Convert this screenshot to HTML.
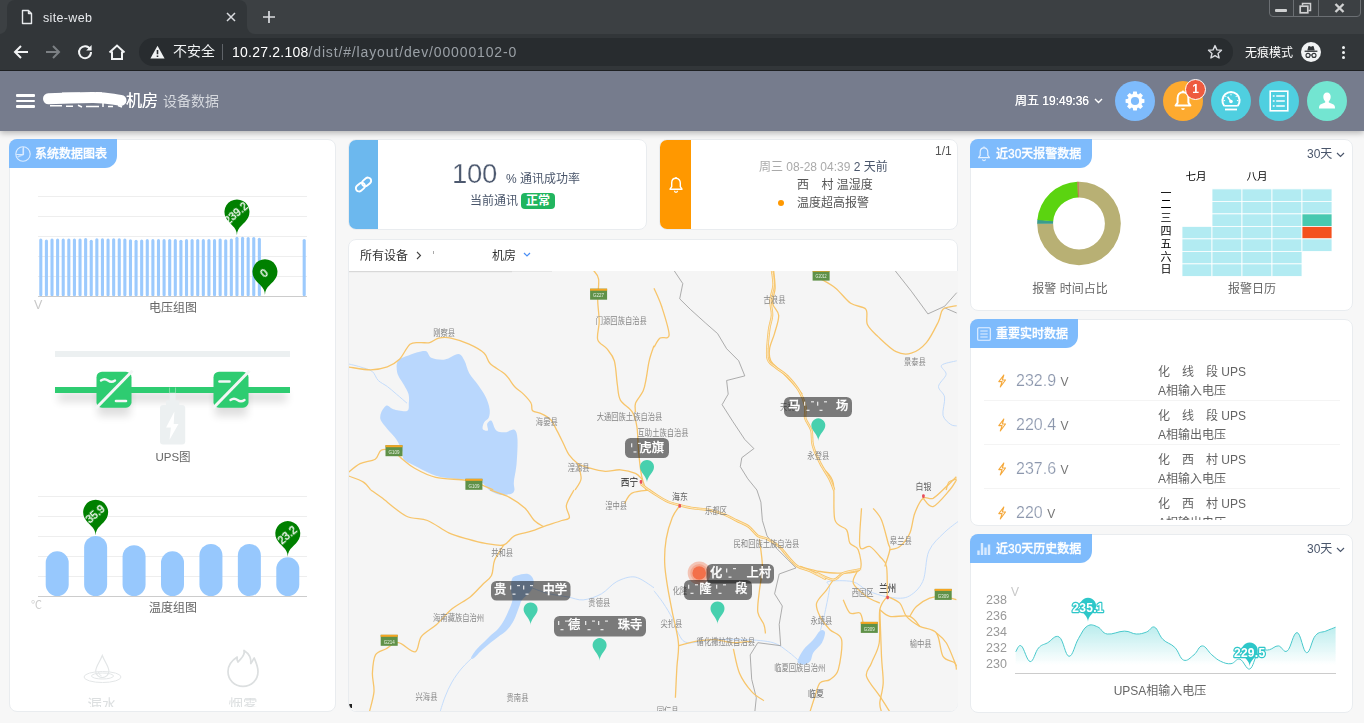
<!DOCTYPE html>
<html lang="zh-CN"><head><meta charset="utf-8"><title>site-web</title>
<style>
*{box-sizing:border-box;margin:0;padding:0}
html,body{width:1364px;height:727px;overflow:hidden;background:#f7f7f7}
body{position:relative;font-family:"Liberation Sans","Noto Sans CJK SC",sans-serif;font-size:12px;color:#555;line-height:1}
.abs{position:absolute}
svg{position:absolute;overflow:visible}
.t{position:absolute;white-space:nowrap;line-height:1;will-change:transform}
svg text{will-change:transform}
.c{transform:translateX(-50%)}
.panel{position:absolute;background:#fff;border:1px solid #e9ecef;border-radius:8px;overflow:hidden}
</style></head>
<body>
<!-- page panels -->
<div class="panel" style="left:9px;top:139px;width:327px;height:573px"></div>
<div class="abs" style="left:9px;top:139px;width:108px;height:29px;background:#7ebbfc;border-radius:8px 0 12px 0"></div>
<svg style="left:15px;top:146px" width="16" height="16" viewBox="0 0 16 16"><circle cx="8" cy="8" r="7.2" fill="none" stroke="#dcecff" stroke-width="1.1"/><path d="M8.3 1v7.5H1.2" fill="none" stroke="#dcecff" stroke-width="1.1"/><path d="M8.3 8.5V2.2M8.3 8.5L2.5 11" stroke="#dcecff" stroke-width="1.6" opacity=".7"/></svg>
<div class="t" style="left:34.8px;top:147.7px;font-size:12px;font-weight:500;color:#fff;letter-spacing:0;-webkit-text-stroke:.3px #fff">系统数据图表</div>
<svg style="left:0;top:0" width="1364" height="727">
<path d="M38 196.5H307" stroke="#eee" stroke-width="1"/>
<path d="M38 216.5H307" stroke="#eee" stroke-width="1"/>
<path d="M38 236.5H307" stroke="#eee" stroke-width="1"/>
<path d="M38 256.5H307" stroke="#eee" stroke-width="1"/>
<path d="M38 276.5H307" stroke="#eee" stroke-width="1"/>
<rect x="39.25" y="238.5" width="3.1" height="57.7" rx="1.55" fill="#9ccafd"/>
<rect x="44.86" y="239.5" width="3.1" height="56.7" rx="1.55" fill="#9ccafd"/>
<rect x="50.46" y="238.38" width="3.1" height="57.82" rx="1.55" fill="#9ccafd"/>
<rect x="56.06" y="238.5" width="3.1" height="57.7" rx="1.55" fill="#9ccafd"/>
<rect x="61.67" y="238.5" width="3.1" height="57.7" rx="1.55" fill="#9ccafd"/>
<rect x="67.27" y="238.5" width="3.1" height="57.7" rx="1.55" fill="#9ccafd"/>
<rect x="72.88" y="238.5" width="3.1" height="57.7" rx="1.55" fill="#9ccafd"/>
<rect x="78.48" y="238.5" width="3.1" height="57.7" rx="1.55" fill="#9ccafd"/>
<rect x="84.09" y="238" width="3.1" height="58.2" rx="1.55" fill="#9ccafd"/>
<rect x="89.69" y="239.75" width="3.1" height="56.45" rx="1.55" fill="#9ccafd"/>
<rect x="95.29" y="238.25" width="3.1" height="57.95" rx="1.55" fill="#9ccafd"/>
<rect x="100.9" y="238.25" width="3.1" height="57.95" rx="1.55" fill="#9ccafd"/>
<rect x="106.5" y="238.38" width="3.1" height="57.82" rx="1.55" fill="#9ccafd"/>
<rect x="112.11" y="238.25" width="3.1" height="57.95" rx="1.55" fill="#9ccafd"/>
<rect x="117.71" y="238.25" width="3.1" height="57.95" rx="1.55" fill="#9ccafd"/>
<rect x="123.31" y="238.38" width="3.1" height="57.82" rx="1.55" fill="#9ccafd"/>
<rect x="128.92" y="239.25" width="3.1" height="56.95" rx="1.55" fill="#9ccafd"/>
<rect x="134.52" y="239.75" width="3.1" height="56.45" rx="1.55" fill="#9ccafd"/>
<rect x="140.13" y="239.5" width="3.1" height="56.7" rx="1.55" fill="#9ccafd"/>
<rect x="145.73" y="239.12" width="3.1" height="57.07" rx="1.55" fill="#9ccafd"/>
<rect x="151.34" y="239.12" width="3.1" height="57.07" rx="1.55" fill="#9ccafd"/>
<rect x="156.94" y="239.12" width="3.1" height="57.07" rx="1.55" fill="#9ccafd"/>
<rect x="162.54" y="239.12" width="3.1" height="57.07" rx="1.55" fill="#9ccafd"/>
<rect x="168.15" y="239" width="3.1" height="57.2" rx="1.55" fill="#9ccafd"/>
<rect x="173.75" y="239.12" width="3.1" height="57.07" rx="1.55" fill="#9ccafd"/>
<rect x="179.36" y="239.75" width="3.1" height="56.45" rx="1.55" fill="#9ccafd"/>
<rect x="184.96" y="239.12" width="3.1" height="57.07" rx="1.55" fill="#9ccafd"/>
<rect x="190.56" y="239" width="3.1" height="57.2" rx="1.55" fill="#9ccafd"/>
<rect x="196.17" y="239" width="3.1" height="57.2" rx="1.55" fill="#9ccafd"/>
<rect x="201.77" y="239.12" width="3.1" height="57.07" rx="1.55" fill="#9ccafd"/>
<rect x="207.38" y="239" width="3.1" height="57.2" rx="1.55" fill="#9ccafd"/>
<rect x="212.98" y="239.12" width="3.1" height="57.07" rx="1.55" fill="#9ccafd"/>
<rect x="218.59" y="238.5" width="3.1" height="57.7" rx="1.55" fill="#9ccafd"/>
<rect x="224.19" y="239.25" width="3.1" height="56.95" rx="1.55" fill="#9ccafd"/>
<rect x="229.79" y="238.38" width="3.1" height="57.82" rx="1.55" fill="#9ccafd"/>
<rect x="235.4" y="236.7" width="3.1" height="59.5" rx="1.55" fill="#9ccafd"/>
<rect x="241" y="236.75" width="3.1" height="59.45" rx="1.55" fill="#9ccafd"/>
<rect x="246.61" y="236.88" width="3.1" height="59.32" rx="1.55" fill="#9ccafd"/>
<rect x="252.21" y="236.88" width="3.1" height="59.32" rx="1.55" fill="#9ccafd"/>
<rect x="257.81" y="237.75" width="3.1" height="58.45" rx="1.55" fill="#9ccafd"/>
<rect x="302.65" y="239" width="3.1" height="57.2" rx="1.55" fill="#9ccafd"/>
<path d="M38 296.5H307" stroke="#ccc" stroke-width="1"/>
<path d="M225.7 217.45A12.5 12.5 0 1 1 248.2 217.45C244.92 224.2 236.95 226.45 236.95 235.2C236.95 226.45 228.97 224.2 225.7 217.45Z" fill="#008000"/>
<text x="236.05" y="213.2" transform="rotate(-41 236.05 213.2)" text-anchor="middle" dominant-baseline="central" font-size="10.8" fill="#fff" stroke="#fff" stroke-width=".35">239.2</text>
<path d="M253.72 277.25A12.5 12.5 0 1 1 276.22 277.25C272.94 284 264.97 286.25 264.97 295C264.97 286.25 256.99 284 253.72 277.25Z" fill="#008000"/>
<text x="264.07" y="273" transform="rotate(-41 264.07 273)" text-anchor="middle" dominant-baseline="central" font-size="10.8" fill="#fff" stroke="#fff" stroke-width=".35">0</text>
<path d="M38 496.5H307" stroke="#eee" stroke-width="1"/>
<path d="M38 516.5H307" stroke="#eee" stroke-width="1"/>
<path d="M38 536.5H307" stroke="#eee" stroke-width="1"/>
<path d="M38 556.5H307" stroke="#eee" stroke-width="1"/>
<path d="M38 576.5H307" stroke="#eee" stroke-width="1"/>
<rect x="45.71" y="551.3" width="23" height="44.7" rx="11.5" fill="#97c8fd"/>
<rect x="84.14" y="536" width="23" height="60" rx="11.5" fill="#97c8fd"/>
<rect x="122.57" y="545.2" width="23" height="50.8" rx="11.5" fill="#97c8fd"/>
<rect x="161" y="551.3" width="23" height="44.7" rx="11.5" fill="#97c8fd"/>
<rect x="199.43" y="543.9" width="23" height="52.1" rx="11.5" fill="#97c8fd"/>
<rect x="237.86" y="543.9" width="23" height="52.1" rx="11.5" fill="#97c8fd"/>
<rect x="276.29" y="557.3" width="23" height="38.7" rx="11.5" fill="#97c8fd"/>
<path d="M38 596.5H307" stroke="#ccc" stroke-width="1"/>
<path d="M84.4 517.75A12.5 12.5 0 1 1 106.89 517.75C103.62 524.5 95.64 526.75 95.64 535.5C95.64 526.75 87.67 524.5 84.4 517.75Z" fill="#008000"/>
<text x="94.74" y="513.5" transform="rotate(-41 94.74 513.5)" text-anchor="middle" dominant-baseline="central" font-size="10.8" fill="#fff" stroke="#fff" stroke-width=".35">35.9</text>
<path d="M276.54 539.05A12.5 12.5 0 1 1 299.03 539.05C295.76 545.8 287.79 548.05 287.79 556.8C287.79 548.05 279.81 545.8 276.54 539.05Z" fill="#008000"/>
<text x="286.89" y="534.8" transform="rotate(-41 286.89 534.8)" text-anchor="middle" dominant-baseline="central" font-size="10.8" fill="#fff" stroke="#fff" stroke-width=".35">23.2</text>
<rect x="55" y="351" width="235" height="6" fill="#ecf0f1"/>
<defs><filter id="gs" x="-20%" y="-50%" width="140%" height="300%"><feGaussianBlur stdDeviation="4"/></filter></defs>
<rect x="58" y="392" width="229" height="10" fill="#000" opacity=".12" filter="url(#gs)"/>
<rect x="98" y="386" width="32" height="30" fill="#000" opacity=".13" filter="url(#gs)"/><rect x="215" y="386" width="32" height="30" fill="#000" opacity=".13" filter="url(#gs)"/>
<rect x="55" y="387" width="235" height="6" fill="#2ecc71"/>
<path d="M169.5 387.5v5.5h6v-5.5" fill="none" stroke="#8fe0b0" stroke-width=".8"/>
<rect x="169.6" y="393" width="6" height="9" fill="#ecf0f1"/><rect x="166" y="400.5" width="13.2" height="6" rx="1" fill="#ecf0f1"/><rect x="160" y="405" width="25.2" height="39.6" rx="3" fill="#ecf0f1"/>
<path d="M174.4 411.6l-8.3 15.8h4.8l-1.4 12.4 9-15.8h-4.8z" fill="#fff"/>
<rect x="96.5" y="371.7" width="35" height="36" rx="5.5" fill="#2ecc71"/>
<path d="M95.5 408.7L132.5 370.7" stroke="#f4f6f6" stroke-width="3"/>
<path d="M101 380.5q3.5-2.5 7 0t7 0" fill="none" stroke="#f4f6f6" stroke-width="2.4" stroke-linecap="round"/>
<path d="M116 401h10" stroke="#f4f6f6" stroke-width="2.6" stroke-linecap="round"/>
<rect x="213.5" y="371.7" width="35" height="36" rx="5.5" fill="#2ecc71"/>
<path d="M212.5 408.7L249.5 370.7" stroke="#f4f6f6" stroke-width="3"/>
<path d="M219.5 381.5h10" stroke="#f4f6f6" stroke-width="2.6" stroke-linecap="round"/>
<path d="M230.5 400q3.5-2.5 7 0t7 0" fill="none" stroke="#f4f6f6" stroke-width="2.4" stroke-linecap="round"/>
<g fill="none" stroke="#e3e6e7" stroke-width="1"><path d="M102.3 655.5c-2.5 6.5-6.6 11-6.6 15.5a6.6 6.6 0 0 0 13.2 0c0-4.5-4.1-9-6.6-15.5z" stroke-width="1.2"/><path d="M98.5 672a4 4 0 0 0 3 3.8" /><ellipse cx="102.5" cy="677" rx="18.5" ry="5.5"/><ellipse cx="102.5" cy="676" rx="11" ry="3"/></g>
<path d="M244 650.5c1.5 5.5-3.5 8-6 11.5-1-1.5-1.2-3.2-.8-5-5.5 3.5-9.2 8.5-9.2 14.5 0 8.5 6.5 14.8 15 14.8s15-6.3 15-14.8c0-5-2-9-3.8-13.5-1.5 2-2.2 4.5-3.4 5.5.5-5-2-10-6.8-13z" fill="none" stroke="#dcdfe0" stroke-width="1.7" stroke-linejoin="round"/>
</svg>
<div class="t" style="left:33.5px;top:299px;font-size:12.5px;color:#c8c8c8">V</div>
<div class="t c" style="left:172.5px;top:302.3px;font-size:12px;color:#666">电压组图</div>
<div class="t c" style="left:172.5px;top:452px;font-size:11.5px;color:#666">UPS图</div>
<div class="t" style="left:31px;top:599.5px;font-size:11px;color:#ccc">℃</div>
<div class="t c" style="left:172.5px;top:602.2px;font-size:12px;color:#666">温度组图</div>
<div class="abs" style="left:10px;top:690px;width:325px;height:16.5px;overflow:hidden"><div class="t c" style="left:92px;top:8px;font-size:14.5px;color:#dcdfe0">漏水</div><div class="t c" style="left:233px;top:8px;font-size:14.5px;color:#dcdfe0">烟雾</div></div>
<div class="panel" style="left:348px;top:139px;width:299px;height:91px"><div class="abs" style="left:0;top:0;width:29px;height:100%;background:#6cb8ee"></div></div>
<svg style="left:355px;top:176px" width="17" height="17" viewBox="0 0 17 17"><g fill="none" stroke="#fff" stroke-width="1.9" transform="rotate(-40 8.5 8.5)"><rect x="-0.5" y="5.3" width="10" height="6.4" rx="3.2"/><rect x="7.5" y="5.3" width="10" height="6.4" rx="3.2"/></g></svg>
<div class="t" style="left:451.5px;top:159.5px;font-size:27.5px;color:#4d596f;letter-spacing:-0.3px;-webkit-text-stroke:.25px #fff">100</div>
<div class="t" style="left:506px;top:173px;font-size:12px;color:#4a566b">% 通讯成功率</div>
<div class="t" style="left:469.5px;top:195.2px;font-size:12px;color:#4a566b">当前通讯</div>
<div class="abs" style="left:521px;top:193px;width:34px;height:16px;border-radius:4px;background:#21b55f;color:#fff;font-weight:bold;font-size:12px;text-align:center;line-height:17px">正常</div>
<div class="panel" style="left:659px;top:139px;width:299px;height:91px"><div class="abs" style="left:0;top:0;width:31px;height:100%;background:#ff9800"></div></div>
<svg style="left:668px;top:176px" width="16" height="18" viewBox="0 0 16 18"><path d="M8 2.3c-2.7 0-4.3 2.1-4.3 4.6v3.8L2 13.2h12l-1.7-2.5V6.9c0-2.5-1.6-4.6-4.3-4.6z" fill="none" stroke="#fff" stroke-width="1.4" stroke-linejoin="round"/><path d="M6.5 14.8a1.5 1.5 0 0 0 3 0" fill="none" stroke="#fff" stroke-width="1.3"/><path d="M8 1v1.3" stroke="#fff" stroke-width="1.4"/></svg>
<div class="t" style="left:935px;top:145px;font-size:12px;color:#555">1/1</div>
<div class="t" style="left:758.5px;top:161px;font-size:12px;color:#aaa">周三 08-28 04:39 <span style="color:#4a566b">2 天前</span></div>
<div class="t" style="left:796.5px;top:179px;font-size:12px;color:#555">西<span style="display:inline-block;width:12.5px"></span>村 温湿度</div>
<div class="abs" style="left:778px;top:200px;width:6px;height:6px;border-radius:50%;background:#ff9800"></div>
<div class="t" style="left:796.5px;top:197px;font-size:12px;color:#555">温度超高报警</div>
<div class="panel" style="left:348px;top:238.5px;width:610px;height:473.5px"></div>
<div class="t" style="left:360px;top:249.5px;font-size:12px;color:#333">所有设备</div>
<svg style="left:416px;top:250.5px" width="6" height="9" viewBox="0 0 6 9"><path d="M1 1l3.5 3.5L1 8" fill="none" stroke="#444" stroke-width="1.1"/></svg>
<div class="t" style="left:491.5px;top:249.5px;font-size:12px;color:#333">机房</div>
<div class="abs" style="left:433px;top:251px;width:1px;height:3px;background:#555;opacity:.5"></div>
<svg style="left:523px;top:252px" width="8" height="6" viewBox="0 0 8 6"><path d="M1 1l3 3 3-3" fill="none" stroke="#4b8ff5" stroke-width="1.2"/></svg>
<svg style="left:349px;top:271px" width="609" height="440" viewBox="349 271 609 440"><defs><clipPath id="mc"><path d="M349 271h609v432a8 8 0 0 1-8 8H357a8 8 0 0 1-8-8z"/></clipPath></defs><g clip-path="url(#mc)">
<rect x="349" y="271" width="609" height="440" fill="#f5f5f5"/>
<path d="M397.9 360.8C399.7 358 404.2 356.9 408.5 355.4C412.9 353.8 421.5 350.7 425.2 351.1C428.8 351.5 428.1 356.4 431.2 357.8C434.4 359.1 440.5 360.2 444.9 359.6C449.2 359 455.3 353.9 458.5 354.1C461.6 354.3 462.8 357.8 464.5 360.8C466.2 363.8 466.9 369 469.1 372.9C471.2 376.8 475.5 381.1 478.1 385C480.8 388.9 483.9 393.2 485.7 397.1C487.6 401 489.2 405.9 489.6 409.2C490.1 412.5 489.6 415.6 488.7 417.7C487.9 419.8 485.2 420.4 484.2 422.2C483.2 424 482.1 427.6 482.7 428.9C483.3 430.2 487.1 431.2 487.8 430.4C488.6 429.6 486.6 425.3 487.2 423.8C487.8 422.2 490 419.7 491.5 420.7C492.9 421.8 494.1 428.6 496.3 430.4C498.5 432.3 502.5 432.3 505.4 432.2C508.3 432.1 512.5 428.6 514.5 429.8C516.4 431 517.2 434.1 517.5 439.5C517.8 444.9 517.2 456.9 516.6 463.7C516 470.5 514.2 477.7 513.9 481.9C513.5 486.1 514.8 488.1 514.4 490C514 491.9 513.6 492.9 511.4 493.7C509.2 494.4 504.1 495.4 500.7 494.9C497.3 494.4 493.1 492.7 490 490.6C486.9 488.5 484.5 483.7 481.2 481.9C477.8 480.1 473.4 479.9 469.1 479.4C464.7 479 459.3 479.4 453.9 478.8C448.6 478.3 441.6 477.7 435.8 475.8C430 474 422.7 470 417.6 467.3C412.5 464.7 406.4 462 404 459.5C401.6 456.9 403.7 454.8 402.5 451.6C401.3 448.4 398.8 443.1 396.4 439.5C394 435.9 389.9 432 387.3 428.9C384.8 425.8 381.7 422.8 380.7 420.1C379.7 417.5 380.3 414.6 381.3 412.3C382.3 409.9 384.8 406.1 386.7 405.6C388.7 405.1 390.2 408.4 393.4 409.2C396.6 410.1 404.5 412 407 411C409.5 410.1 408.6 405.9 408.8 403.2C409.1 400.5 409.3 397 408.5 394.1C407.8 391.2 405.8 388.4 404 385C402.2 381.6 398.3 376.8 397.3 372.9C396.4 369 396.1 363.6 397.9 360.8Z" fill="#b9d7fd"/>
<path d="M512 579C513 576.7 514.4 576.3 517 575.5C519.6 574.7 525.4 573.3 528 574C530.6 574.7 532.9 577.4 533.5 580C534.1 582.6 533.3 586.8 531.5 590C529.7 593.2 523.9 597.4 522 600C520.1 602.6 520.8 602.8 519.5 606C518.2 609.2 516 616.2 514 620C512 623.8 509.6 627.3 507 630C504.4 632.7 500.9 634.8 498 637C495.1 639.2 491.7 641.8 489 644C486.3 646.2 483.4 648.8 481 651C478.6 653.2 475.6 656.9 474 658C472.4 659.1 470.7 659.3 471 658C471.3 656.7 473.9 652.6 476 650C478.1 647.4 481.8 644.2 484 642C486.2 639.8 487.9 637.9 490 636C492.1 634.1 494.9 632.2 497 630C499.1 627.8 501.2 624.9 503 622C504.8 619.1 506.5 615.5 508 612C509.5 608.5 512 603.5 512.5 600C513 596.5 511.1 593.4 511 590C510.9 586.6 511 581.3 512 579Z" fill="#b9d7fd"/>
<path d="M797.5 661.6C797.5 659.2 801.2 652.8 803.6 649.4C806.1 646 810.1 643.3 812.8 640.3C815.5 637.2 818.5 631.7 820.4 630.5C822.4 629.2 824.8 630.4 825 632.3C825.3 634.3 823.8 639.5 822 642.7C820.1 645.9 815.3 649.5 813.4 652.5C811.6 655.4 811.9 659.1 810.4 661C808.8 663 805.7 664.6 803.6 664.7C801.6 664.8 797.5 664.1 797.5 661.6Z" fill="#b9d7fd"/>
<path d="M348 363.8C349.9 364.3 356.2 365.6 360.1 366.9C364 368.1 369.3 369.2 372.2 371.4C375.1 373.6 375.8 378.1 378.3 380.5C380.7 382.9 384.4 384.3 387.3 386.5C390.3 388.7 393.3 391.4 396.4 394.1C399.6 396.8 405.3 401.7 407 403.2" stroke="#c4dcfb" stroke-width="1" fill="none"/>
<path d="M473 657C471.2 658.8 465.4 664 462 668C458.6 672 454.7 677.4 452 682C449.3 686.6 446.9 692.2 445 697C443.1 701.8 440.8 709.6 440 712" stroke="#c4dcfb" stroke-width="1" fill="none"/>
<path d="M531.2 587.7C534.2 588.7 543.7 592.4 549.6 593.8C555.4 595.3 562.5 595.9 567.9 596.9C573.3 597.9 577.8 600.4 583.2 599.9C588.5 599.5 596.1 596.8 601.5 593.8C606.8 590.9 611.4 584.3 616.7 581.6C622.1 578.9 629.1 576.1 635.1 577C641 578 651 586 654 587.7" stroke="#c4dcfb" stroke-width="1" fill="none"/>
<path d="M654 590.8C655.5 592.7 660.2 598.6 663.2 603C666.1 607.4 669.9 613.4 672.3 618.3C674.8 623.2 676 629.6 678.4 633.5C680.9 637.4 681.7 641.7 687.6 642.7C693.5 643.7 705.8 640.1 715.1 639.6C724.4 639.2 736.3 639.2 745.6 639.6C754.9 640.1 766.3 640.7 773.1 642.7C779.9 644.6 784.2 648.9 788.4 651.9C792.5 654.8 797.4 659.6 799.1 661" stroke="#c4dcfb" stroke-width="1" fill="none"/>
<path d="M820.4 630.5C821.2 627.5 823.6 619 825 612.2C826.5 605.3 829.1 592.6 829.6 587.7C830.1 582.8 824.4 582.6 828.1 581.6C831.7 580.6 846.2 580.2 852.5 581.6C858.9 583.1 862.2 588.3 867.8 590.8C873.4 593.2 881.3 595.9 887.6 596.9C894 597.9 901.9 599.3 907.5 596.9C913.1 594.4 919.3 588.9 922.7 581.6C926.2 574.3 925.4 558.9 928.9 551.1C932.3 543.3 939.2 537.6 944.1 532.8C949 527.9 956.9 522.5 959.4 520.5" stroke="#c4dcfb" stroke-width="1" fill="none"/>
<path d="M956.7 360.8C954.2 361.5 943.2 363.2 941.5 365.3C939.8 367.5 946.6 371 946.1 374.4C945.6 377.8 938.7 382.9 938.5 386.5C938.3 390.2 943.8 392.5 944.6 397.1C945.3 401.7 942.1 410.9 943 415.3C944 419.6 948.4 422.7 950.6 424.4C952.8 426.1 955.7 425.6 956.7 425.9" stroke="#c4dcfb" stroke-width="1" fill="none"/>
<path d="M673.7 270L682.8 283.6L679.7 298.8L690.3 309.3L705.5 323L717.6 333.6L726.6 348.7L738.7 360.8L744.8 375.9L726.6 380.5L728.2 394.1L722.1 404.7L732.7 421.3L744.8 439.5L753.9 448.6L741.8 457.7L740.3 466.7L747.8 478.8L756.9 490L760.9 502.2L762.4 520.5L767 535.8L776.2 548L788.4 560.2L796 567.9L779.2 574L774.6 593.8L782.3 606L779.2 624.4L780.7 645.7L757.8 642.7L750.2 654.9L751.7 679.3L756.3 697.7L754.8 712" stroke="#999" stroke-width=".8" fill="none"/>
<path d="M894.6 270L911.3 291.2L927.9 313.9L944.6 306.3L956.7 292.7" stroke="#999" stroke-width=".8" fill="none"/>
<path d="M944.6 307.8L956.7 313" stroke="#999" stroke-width=".8" fill="none"/>
<path d="M348 366.9C351.6 367.3 364.4 369.9 370.7 369.9C377 369.9 382.7 368.5 387.3 366.9C391.9 365.2 395.8 362.9 399.5 359.3C403.1 355.7 406.7 346.8 410 344.2C413.4 341.5 417.5 342.9 420.6 342.6C423.8 342.4 426.8 343.4 429.7 342.6C432.6 341.9 435.4 338.8 438.8 338.1C442.2 337.4 446.1 337.1 450.9 338.1C455.7 339.1 463.7 341.7 469.1 344.2C474.4 346.6 480.8 350.1 484.2 353.2C487.6 356.4 486.9 360.4 490.3 363.8C493.6 367.2 501.5 370.8 505.4 374.4C509.3 378.1 511.6 383.4 514.5 386.5C517.4 389.7 520.9 391.4 523.5 394.1C526.2 396.8 529.7 400.5 531.1 403.2C532.6 405.8 530.9 409 532.6 410.7C534.3 412.4 538.8 412.3 541.7 413.8C544.6 415.2 548.4 417.2 550.8 419.8C553.2 422.5 554.9 426.8 556.8 430.4C558.8 434 561 438.6 562.9 442.5C564.8 446.4 566.5 451.2 568.9 454.6C571.4 458 574.6 461.5 578 463.7C581.4 465.9 585.8 467 590.1 468.2C594.5 469.5 600.4 471 605.3 471.3C610.1 471.5 615.6 469.4 620.4 469.8C625.2 470.1 632 471.8 635.5 473.4C639 474.9 641.1 478.5 642.2 479.4" stroke="#f7c56b" stroke-width="1.3" fill="none" stroke-linejoin="round"/>
<path d="M593.2 270C594 271.5 597.9 274.2 598.6 279.1C599.3 283.9 597.6 293.5 597.7 300.3C597.8 307 599.2 315.2 599.2 321.5C599.2 327.7 596.5 335.3 597.7 339.6C598.9 344 604.1 345.3 606.8 348.7C609.4 352.1 612.6 355 614.3 360.8C616 366.6 616.4 378.7 617.4 385C618.3 391.3 618 395.8 620.4 400.1C622.8 404.5 629.8 407.9 632.5 412.3C635.2 416.6 636.1 421.1 637 427.4C638 433.7 637.8 443.8 638.6 451.6C639.3 459.3 640.4 469.7 641.6 475.8C642.8 482 645.4 487.8 646.1 490" stroke="#f7c56b" stroke-width="1.3" fill="none" stroke-linejoin="round"/>
<path d="M654 345.7C653.2 348.1 650.4 355.5 649.2 360.8C647.9 366.1 647.1 374.1 646.1 379C645.2 383.8 644.8 387.2 643.1 391.1C641.4 394.9 636.7 399.8 635.5 403.2C634.3 406.6 635.5 410.8 635.5 412.3" stroke="#f7c56b" stroke-width="1.3" fill="none" stroke-linejoin="round"/>
<path d="M348 472.8C349.9 471.3 355.7 465.9 360.1 463.7C364.5 461.5 371.8 461.3 375.2 459.2C378.6 457 378.4 451.3 381.3 450.1C384.2 448.9 390 450.1 393.4 451.6C396.8 453.1 399.1 456.5 402.5 459.2C405.9 461.8 409.3 465.3 414.6 468.2C419.9 471.2 427.5 475.4 435.8 477.3C444 479.3 458.8 479.1 466 480.4C473.3 481.6 476.8 483.3 481.2 484.9C485.5 486.4 491.3 489.2 493.3 490" stroke="#f7c56b" stroke-width="1.3" fill="none" stroke-linejoin="round"/>
<path d="M348 475.8C350.4 476.8 359.5 479.6 363.1 481.9C366.8 484.1 369.5 488.7 370.7 490" stroke="#f7c56b" stroke-width="1.3" fill="none" stroke-linejoin="round"/>
<path d="M578 463.7C578.5 466.1 581.5 474.6 581.1 478.8C580.6 483.1 576 488.2 575 490" stroke="#f7c56b" stroke-width="1.3" fill="none" stroke-linejoin="round"/>
<path d="M654 288.2C655.2 291.1 659.1 298.8 661.6 306.3C664 313.8 669.4 330 669.1 335.1C668.9 340.2 662.5 336.2 660.1 338.1C657.6 340 655 345.7 654 347.2" stroke="#f7c56b" stroke-width="1.3" fill="none" stroke-linejoin="round"/>
<path d="M772 270C772.3 272.4 773.8 280.3 773.6 285.1C773.3 290 770.8 295.4 770.5 300.3C770.3 305.1 772.3 310.6 772 315.4C771.8 320.2 769.7 323.8 769 330.5C768.3 337.3 766.5 352 767.5 357.8C768.5 363.6 771.9 363.9 775.1 366.9C778.2 369.8 783.3 372.1 787.2 375.9C791 379.8 796.4 386.2 799.3 391.1C802.2 395.9 804.4 401.8 805.3 406.2C806.3 410.6 804.4 414.4 805.3 418.3C806.3 422.2 810.2 426.1 811.4 430.4C812.6 434.8 811.4 440.2 812.9 445.5C814.4 450.9 817.8 458.4 820.5 463.7C823.1 469 827.4 474.6 829.5 478.8C831.7 483.1 833.4 488.2 834.1 490" stroke="#f7c56b" stroke-width="1.3" fill="none" stroke-linejoin="round"/>
<path d="M773.6 270C773.8 272.9 775.2 282.8 775.1 288.2C774.9 293.5 772.1 298.9 772.6 303.3C773.2 307.7 778.4 310.6 778.7 315.4C779 320.2 775.9 328.2 774.5 333.6C773 338.9 770.2 344.3 769.6 348.7C769 353.1 769 357.2 770.8 360.8C772.7 364.4 777.9 368.1 781.1 371.4C784.3 374.7 787.4 377.7 790.8 381.4C794.2 385 800.5 392.1 802.3 394.1" stroke="#f7c56b" stroke-width="1.3" fill="none" stroke-linejoin="round"/>
<path d="M821.1 279.1C823.4 280.5 830.9 284.3 835.6 288.2C840.3 292 845.9 299.9 850.7 303.3C855.6 306.7 863.2 306 865.9 309.3C868.5 312.7 865.4 320.1 867.4 324.5C869.3 328.8 873.4 332.2 878 336.6C882.6 340.9 890.8 349.1 896.1 351.7C901.5 354.4 906.4 354.7 911.3 353.2C916.1 351.8 922 347.7 926.4 342.6C930.8 337.6 935.8 326.8 938.5 321.5C941.2 316.1 940.1 311.9 943 309.3C945.9 306.8 954.5 306.3 956.7 305.7" stroke="#f7c56b" stroke-width="1.3" fill="none" stroke-linejoin="round"/>
<path d="M956.7 478.8C955.5 479.3 950.8 480.1 949.1 481.9C947.4 483.7 946.6 488.7 946.1 490" stroke="#f7c56b" stroke-width="1.3" fill="none" stroke-linejoin="round"/>
<path d="M370.9 490C372.6 491.2 376 493.5 381.6 497.6C387.2 501.8 398.7 512.3 406 516C413.4 519.6 420.6 517.9 427.4 520.5C434.2 523.2 442.4 529.8 448.8 532.8C455.1 535.7 461.2 537.2 467.1 538.9C473 540.6 479.6 542.5 485.4 543.4C491.3 544.4 499.1 546.2 503.7 545C508.4 543.7 510 538 514.4 535.8C518.8 533.6 526.6 532.7 531.2 531.2C535.9 529.8 538.6 528.4 543.4 526.6C548.3 524.9 557.6 522 561.8 520.5C565.9 519.1 568.7 519.9 569.4 517.5C570.1 515 565.6 509.7 566.4 505.3C567.1 500.9 572.8 492.4 574 490" stroke="#f7c56b" stroke-width="1.3" fill="none" stroke-linejoin="round"/>
<path d="M490 490C493.2 491.2 504.2 494.7 509.9 497.6C515.5 500.6 521.2 504.7 525.1 508.3C529 512 531.4 517.6 534.3 520.5C537.2 523.5 542 525.7 543.4 526.6" stroke="#f7c56b" stroke-width="1.3" fill="none" stroke-linejoin="round"/>
<path d="M503.7 545C502.3 547.4 496.5 555.4 494.6 560.2C492.6 565.1 493.5 571.6 491.5 575.5C489.6 579.4 485.8 581.3 482.4 584.7C479 588.1 475 593 470.2 596.9C465.3 600.8 457.2 604.7 451.8 609.1C446.5 613.5 441.4 620 436.6 624.4C431.7 628.8 424.7 632.2 421.3 636.6C417.9 641 418.9 650.9 415.2 651.9C411.5 652.8 403 643.2 398.4 642.7C393.7 642.2 389.8 646.8 386.2 648.8C382.5 650.8 377.7 651 375.5 654.9C373.3 658.8 372.7 667.4 372.4 673.2C372.2 679.1 374.4 685.4 374 691.6C373.5 697.8 370.1 708.7 369.4 712" stroke="#f7c56b" stroke-width="1.3" fill="none" stroke-linejoin="round"/>
<path d="M624.4 503.7C625.6 502 627.9 495.3 632 493.1C636.2 490.9 647.4 490.5 650.3 490" stroke="#f7c56b" stroke-width="1.3" fill="none" stroke-linejoin="round"/>
<path d="M640.9 483.9C642 484.8 645.3 487.5 647.9 489.4C650.5 491.2 653.9 493.5 657.1 495.5C660.2 497.5 664.1 500 667.7 501.6C671.4 503.2 675.8 504.2 680 505.3C684.1 506.3 689.1 507.6 693.7 508.3C698.3 509.1 704.1 508.9 709 509.9C713.9 510.8 719.8 512.7 724.2 514.4C728.6 516.1 732.5 518.6 736.5 520.5C740.4 522.5 745.3 524.2 748.7 526.6C752.1 529.1 754.9 533.9 757.8 535.8C760.8 537.8 763.6 537.2 767 538.9C770.4 540.6 775.8 543.6 779.2 546.5C782.6 549.4 785.4 554 788.4 557.2C791.3 560.4 794.1 564.1 797.5 566.3C801 568.5 805.4 569 809.7 570.9C814.1 572.9 822.6 577.3 825 578.6" stroke="#f7c56b" stroke-width="1.3" fill="none" stroke-linejoin="round"/>
<path d="M680 505.3C678.7 507.2 674.5 512.1 672.3 517.5C670.1 522.9 667.4 531.5 666.2 538.9C665 546.2 664.4 555.5 664.7 563.3C664.9 571.1 666.5 579.9 667.7 587.7C669 595.5 670.6 603.4 672.3 612.2C674 621 677.7 633.9 678.4 642.7C679.2 651.5 677.4 658.3 676.9 667.1C676.4 675.9 675.6 692.8 675.4 697.7" stroke="#f7c56b" stroke-width="1.3" fill="none" stroke-linejoin="round"/>
<path d="M759.4 538.9C759.8 543.3 762.4 558 762.4 566.3C762.4 574.7 760.1 583.4 759.4 590.8C758.6 598.1 757.1 606.8 757.8 612.2C758.6 617.5 762.7 621 763.9 624.4C765.2 627.8 765.2 632.1 765.5 633.5" stroke="#f7c56b" stroke-width="1.3" fill="none" stroke-linejoin="round"/>
<path d="M678.4 645.7C681.4 645 690.9 642.1 696.8 641.2C702.6 640.2 709.2 639.4 715.1 639.6C720.9 639.9 727.5 642.5 733.4 642.7C739.3 642.9 748.8 641.4 751.7 641.2" stroke="#f7c56b" stroke-width="1.3" fill="none" stroke-linejoin="round"/>
<path d="M733.4 648.8C734.4 652.7 736.6 666.4 739.5 673.2C742.4 680.1 747.8 687.2 751.7 691.6C755.6 696 762 699.3 763.9 700.7" stroke="#f7c56b" stroke-width="1.3" fill="none" stroke-linejoin="round"/>
<path d="M825 470C826.3 472.1 831.7 475.3 833.3 483.3C834.9 491.3 832.8 512.4 834.9 519.9C837.1 527.4 844.2 526.2 846.6 529.9C849 533.6 848 540 849.9 543.2C851.8 546.4 856.6 545.6 858.2 549.8C859.8 554.1 862.8 566.1 859.9 569.8C857 573.5 846.3 572.9 839.9 573.1C833.5 573.4 826.3 572.5 820 571.5C813.6 570.4 803.2 567.3 800 566.5" stroke="#f7c56b" stroke-width="1.3" fill="none" stroke-linejoin="round"/>
<path d="M861.5 508.3C861.3 514.4 858.5 540.4 859.9 546.5C861.2 552.6 866.7 544.9 869.9 546.5C873.1 548.1 877.2 553.3 879.8 556.5C882.5 559.7 885.3 560.1 886.5 566.5C887.7 572.9 887.1 591.6 887.2 596.4" stroke="#f7c56b" stroke-width="1.3" fill="none" stroke-linejoin="round"/>
<path d="M873.2 508.3C874.5 510.1 879.1 514.3 881.5 519.9C883.9 525.5 886.8 538.4 888.2 543.2C889.5 548 890.4 546.1 889.8 549.8C889.3 553.6 885.6 563.8 884.8 566.5" stroke="#f7c56b" stroke-width="1.3" fill="none" stroke-linejoin="round"/>
<path d="M956.4 476.7C954.8 478.3 950.1 483.2 946.4 486.6C942.6 490.1 936.8 496.4 933.1 498.3C929.3 500.1 926 495.9 923.1 498.3C920.2 500.7 916.9 507.7 914.8 513.2C912.6 518.8 912.2 527.9 909.8 533.2C907.4 538.5 903 543.9 899.8 546.5C896.6 549.2 891.4 549.3 889.8 549.8" stroke="#f7c56b" stroke-width="1.3" fill="none" stroke-linejoin="round"/>
<path d="M923.1 498.3C924.7 499.6 928.8 507.9 933.1 506.6C937.3 505.3 946 494.2 949.7 490C953.4 485.7 955.3 481.6 956.4 480" stroke="#f7c56b" stroke-width="1.3" fill="none" stroke-linejoin="round"/>
<path d="M887.2 596.4C886 598.5 881.1 602.3 879.8 609.7C878.6 617.2 880.5 634.5 879.2 643C877.8 651.5 873.5 657.6 871.5 662.9C869.5 668.3 865.2 670.9 866.5 676.3C867.9 681.6 876.1 690.5 879.8 696.2C883.6 701.9 888.2 709.3 889.8 711.8" stroke="#f7c56b" stroke-width="1.3" fill="none" stroke-linejoin="round"/>
<path d="M879.8 609.7C880.1 617.2 881 644.6 881.5 656.3C882 668 883.4 675.5 883.2 682.9C882.9 690.4 880.1 698.2 879.8 702.9C879.6 707.5 881.2 710.4 881.5 711.8" stroke="#f7c56b" stroke-width="1.3" fill="none" stroke-linejoin="round"/>
<path d="M887.2 596.4C889.2 597.5 896.7 599.9 899.8 603.1C902.9 606.3 903.3 612.6 906.5 616.4C909.6 620.1 915 623.7 919.8 626.4C924.6 629 932.7 628.2 936.4 633C940.1 637.8 940.1 651.5 943 656.3C946 661.1 952.6 660.8 954.7 662.9C956.8 665.1 956.1 668.5 956.4 669.6" stroke="#f7c56b" stroke-width="1.3" fill="none" stroke-linejoin="round"/>
<path d="M879.8 609.7C881.4 610.8 885 615.3 889.8 616.4C894.6 617.4 905 614.8 909.8 616.4C914.6 618 918.2 624.8 919.8 626.4" stroke="#f7c56b" stroke-width="1.3" fill="none" stroke-linejoin="round"/>
<path d="M909.8 616.4C910.8 614.8 913.2 609.3 916.4 606.4C919.6 603.5 925.5 599.7 929.7 598.1C934 596.5 938.8 596.1 943 596.4C947.3 596.7 954.2 599.2 956.4 599.7" stroke="#f7c56b" stroke-width="1.3" fill="none" stroke-linejoin="round"/>
<path d="M858.2 569.8C857.4 571.9 851.9 578.8 853.2 583.1C854.6 587.4 862.3 593.2 866.5 596.4C870.8 599.6 877.7 602 879.8 603.1" stroke="#f7c56b" stroke-width="1.3" fill="none" stroke-linejoin="round"/>
<path d="M833.3 579.8C832.2 581.4 829.3 586 826.6 589.8C824 593.5 817.7 598.8 816.6 603.1C815.6 607.3 817.8 612.1 820 616.4C822.1 620.6 826.5 626 829.9 629.7C833.4 633.4 840.3 633.3 841.6 639.7C842.9 646 840.1 663.2 838.3 669.6C836.4 676 832.9 677.5 829.9 679.6C827 681.7 822.4 680.2 820 682.9C817.6 685.6 816.6 691.6 815 696.2C813.4 700.8 810.8 709.3 810 711.8" stroke="#f7c56b" stroke-width="1.3" fill="none" stroke-linejoin="round"/>
<path d="M843.2 599.7C844.3 601.9 847.2 610.9 849.9 613C852.6 615.2 857.8 611.5 859.9 613C862 614.6 862.7 621.4 863.2 623" stroke="#f7c56b" stroke-width="1.3" fill="none" stroke-linejoin="round"/>
<path d="M936.4 633C938 634.6 943.2 637.7 946.4 643C949.6 648.3 954.8 662.5 956.4 666.3" stroke="#f7c56b" stroke-width="1.3" fill="none" stroke-linejoin="round"/>
<path d="M800 566.5C802.7 567.5 811.3 571 816.6 573.1C822 575.3 829 579.8 833.3 579.8C837.5 579.8 839.3 574.7 843.2 573.1C847.2 571.5 855.8 570.3 858.2 569.8" stroke="#f7c56b" stroke-width="1.3" fill="none" stroke-linejoin="round"/>
<path d="M640.9 483.9C642 484.8 645.3 487.5 647.9 489.4C650.5 491.2 653.9 493.5 657.1 495.5C660.2 497.5 664.1 500 667.7 501.6C671.4 503.2 675.8 504.2 680 505.3C684.1 506.3 689.1 507.6 693.7 508.3C698.3 509.1 704.1 508.9 709 509.9C713.9 510.8 719.8 512.7 724.2 514.4C728.6 516.1 732.5 518.6 736.5 520.5C740.4 522.5 745.3 524.2 748.7 526.6C752.1 529.1 754.9 533.9 757.8 535.8C760.8 537.8 763.6 537.2 767 538.9C770.4 540.6 775.8 543.6 779.2 546.5C782.6 549.4 785.4 554 788.4 557.2C791.3 560.4 794.1 564.1 797.5 566.3C801 568.5 805.4 569 809.7 570.9C814.1 572.9 823.9 578.2 825 578.6C826.1 578.9 815.3 572.9 816.6 573.1C818 573.3 829 579.8 833.3 579.8C837.5 579.8 839.3 574.7 843.2 573.1C847.2 571.5 855.6 570.3 858.2 569.8C860.9 569.3 859.6 569.8 859.9 569.8" stroke="#f7c56b" stroke-width="2.6" fill="none" stroke-linejoin="round"/><path d="M640.9 483.9C642 484.8 645.3 487.5 647.9 489.4C650.5 491.2 653.9 493.5 657.1 495.5C660.2 497.5 664.1 500 667.7 501.6C671.4 503.2 675.8 504.2 680 505.3C684.1 506.3 689.1 507.6 693.7 508.3C698.3 509.1 704.1 508.9 709 509.9C713.9 510.8 719.8 512.7 724.2 514.4C728.6 516.1 732.5 518.6 736.5 520.5C740.4 522.5 745.3 524.2 748.7 526.6C752.1 529.1 754.9 533.9 757.8 535.8C760.8 537.8 763.6 537.2 767 538.9C770.4 540.6 775.8 543.6 779.2 546.5C782.6 549.4 785.4 554 788.4 557.2C791.3 560.4 794.1 564.1 797.5 566.3C801 568.5 805.4 569 809.7 570.9C814.1 572.9 823.9 578.2 825 578.6C826.1 578.9 815.3 572.9 816.6 573.1C818 573.3 829 579.8 833.3 579.8C837.5 579.8 839.3 574.7 843.2 573.1C847.2 571.5 855.6 570.3 858.2 569.8C860.9 569.3 859.6 569.8 859.9 569.8" stroke="#fdf0d6" stroke-width=".8" fill="none"/>
<path d="M772 270C772.3 272.4 773.8 280.3 773.6 285.1C773.3 290 770.8 295.4 770.5 300.3C770.3 305.1 772.3 310.6 772 315.4C771.8 320.2 769.7 323.8 769 330.5C768.3 337.3 766.5 352 767.5 357.8C768.5 363.6 771.9 363.9 775.1 366.9C778.2 369.8 783.3 372.1 787.2 375.9C791 379.8 796.4 386.2 799.3 391.1C802.2 395.9 804.4 401.8 805.3 406.2C806.3 410.6 804.4 414.4 805.3 418.3C806.3 422.2 810.2 426.1 811.4 430.4C812.6 434.8 811.4 440.2 812.9 445.5C814.4 450.9 817.8 458.4 820.5 463.7C823.1 469 827.4 474.6 829.5 478.8C831.7 483.1 833.4 488.2 834.1 490" stroke="#f7c56b" stroke-width="2.6" fill="none" stroke-linejoin="round"/><path d="M772 270C772.3 272.4 773.8 280.3 773.6 285.1C773.3 290 770.8 295.4 770.5 300.3C770.3 305.1 772.3 310.6 772 315.4C771.8 320.2 769.7 323.8 769 330.5C768.3 337.3 766.5 352 767.5 357.8C768.5 363.6 771.9 363.9 775.1 366.9C778.2 369.8 783.3 372.1 787.2 375.9C791 379.8 796.4 386.2 799.3 391.1C802.2 395.9 804.4 401.8 805.3 406.2C806.3 410.6 804.4 414.4 805.3 418.3C806.3 422.2 810.2 426.1 811.4 430.4C812.6 434.8 811.4 440.2 812.9 445.5C814.4 450.9 817.8 458.4 820.5 463.7C823.1 469 827.4 474.6 829.5 478.8C831.7 483.1 833.4 488.2 834.1 490" stroke="#fdf0d6" stroke-width=".8" fill="none"/>
<text x="444.2" y="332.7" text-anchor="middle" dominant-baseline="central" font-size="8.8" fill="#858585" textLength="21.9" lengthAdjust="spacingAndGlyphs">刚察县</text>
<text x="621.3" y="320.8" text-anchor="middle" dominant-baseline="central" font-size="8.8" fill="#858585" textLength="51.1" lengthAdjust="spacingAndGlyphs">门源回族自治县</text>
<text x="546.8" y="422.2" text-anchor="middle" dominant-baseline="central" font-size="8.8" fill="#858585" textLength="21.9" lengthAdjust="spacingAndGlyphs">海晏县</text>
<text x="629.5" y="416.8" text-anchor="middle" dominant-baseline="central" font-size="8.8" fill="#858585" textLength="65.7" lengthAdjust="spacingAndGlyphs">大通回族土族自治县</text>
<text x="578.6" y="468.2" text-anchor="middle" dominant-baseline="central" font-size="8.8" fill="#858585" textLength="21.9" lengthAdjust="spacingAndGlyphs">湟源县</text>
<text x="774.5" y="300.3" text-anchor="middle" dominant-baseline="central" font-size="8.8" fill="#858585" textLength="21.9" lengthAdjust="spacingAndGlyphs">古浪县</text>
<text x="914.9" y="362.3" text-anchor="middle" dominant-baseline="central" font-size="8.8" fill="#858585" textLength="21.9" lengthAdjust="spacingAndGlyphs">景泰县</text>
<text x="818.3" y="456.1" text-anchor="middle" dominant-baseline="central" font-size="8.8" fill="#858585" textLength="21.9" lengthAdjust="spacingAndGlyphs">永登县</text>
<text x="663.1" y="433.4" text-anchor="middle" dominant-baseline="central" font-size="8.8" fill="#858585" textLength="51.1" lengthAdjust="spacingAndGlyphs">互助土族自治县</text>
<text x="787.2" y="406.8" text-anchor="middle" dominant-baseline="central" font-size="8.8" fill="#858585" textLength="14.6" lengthAdjust="spacingAndGlyphs">天祝</text>
<text x="616.1" y="505.9" text-anchor="middle" dominant-baseline="central" font-size="8.8" fill="#858585" textLength="21.9" lengthAdjust="spacingAndGlyphs">湟中县</text>
<text x="502.2" y="552.6" text-anchor="middle" dominant-baseline="central" font-size="8.8" fill="#858585" textLength="21.9" lengthAdjust="spacingAndGlyphs">共和县</text>
<text x="599.3" y="603" text-anchor="middle" dominant-baseline="central" font-size="8.8" fill="#858585" textLength="21.9" lengthAdjust="spacingAndGlyphs">贵德县</text>
<text x="458.6" y="617.7" text-anchor="middle" dominant-baseline="central" font-size="8.8" fill="#858585" textLength="51.1" lengthAdjust="spacingAndGlyphs">海南藏族自治州</text>
<text x="426.5" y="697.1" text-anchor="middle" dominant-baseline="central" font-size="8.8" fill="#858585" textLength="21.9" lengthAdjust="spacingAndGlyphs">兴海县</text>
<text x="517.5" y="697.7" text-anchor="middle" dominant-baseline="central" font-size="8.8" fill="#858585" textLength="21.9" lengthAdjust="spacingAndGlyphs">贵南县</text>
<text x="716" y="510.5" text-anchor="middle" dominant-baseline="central" font-size="8.8" fill="#858585" textLength="21.9" lengthAdjust="spacingAndGlyphs">乐都区</text>
<text x="766.4" y="544.4" text-anchor="middle" dominant-baseline="central" font-size="8.8" fill="#858585" textLength="65.7" lengthAdjust="spacingAndGlyphs">民和回族土族自治县</text>
<text x="680" y="590.8" text-anchor="middle" dominant-baseline="central" font-size="8.8" fill="#858585" textLength="14.6" lengthAdjust="spacingAndGlyphs">化隆</text>
<text x="671.4" y="623.8" text-anchor="middle" dominant-baseline="central" font-size="8.8" fill="#858585" textLength="21.9" lengthAdjust="spacingAndGlyphs">尖扎县</text>
<text x="725.8" y="641.8" text-anchor="middle" dominant-baseline="central" font-size="8.8" fill="#858585" textLength="58.4" lengthAdjust="spacingAndGlyphs">循化撒拉族自治县</text>
<text x="799.7" y="668" text-anchor="middle" dominant-baseline="central" font-size="8.8" fill="#858585" textLength="51.1" lengthAdjust="spacingAndGlyphs">临夏回族自治州</text>
<text x="821.4" y="620.7" text-anchor="middle" dominant-baseline="central" font-size="8.8" fill="#858585" textLength="21.9" lengthAdjust="spacingAndGlyphs">永靖县</text>
<text x="862.6" y="592.9" text-anchor="middle" dominant-baseline="central" font-size="8.8" fill="#858585" textLength="21.9" lengthAdjust="spacingAndGlyphs">西固区</text>
<text x="900.8" y="541.3" text-anchor="middle" dominant-baseline="central" font-size="8.8" fill="#858585" textLength="21.9" lengthAdjust="spacingAndGlyphs">皋兰县</text>
<text x="920.6" y="643.6" text-anchor="middle" dominant-baseline="central" font-size="8.8" fill="#858585" textLength="21.9" lengthAdjust="spacingAndGlyphs">榆中县</text>
<text x="667.7" y="710.5" text-anchor="middle" dominant-baseline="central" font-size="8.8" fill="#858585" textLength="21.9" lengthAdjust="spacingAndGlyphs">同仁县</text>
<text x="629.5" y="481.9" text-anchor="middle" dominant-baseline="central" font-size="10.5" fill="#222" textLength="17.4" lengthAdjust="spacingAndGlyphs">西宁</text>
<text x="680" y="496.1" text-anchor="middle" dominant-baseline="central" font-size="9.5" fill="#666" textLength="15.8" lengthAdjust="spacingAndGlyphs">海东</text>
<text x="923.4" y="486.1" text-anchor="middle" dominant-baseline="central" font-size="9.5" fill="#666" textLength="15.8" lengthAdjust="spacingAndGlyphs">白银</text>
<text x="815.9" y="693.7" text-anchor="middle" dominant-baseline="central" font-size="9.5" fill="#666" textLength="15.8" lengthAdjust="spacingAndGlyphs">临夏</text>
<text x="887.6" y="588.3" text-anchor="middle" dominant-baseline="central" font-size="10.5" fill="#222" textLength="17.4" lengthAdjust="spacingAndGlyphs">兰州</text>
<rect x="639.7" y="480.1" width="2.6" height="3.6" rx="1" fill="#e8505b"/>
<rect x="886.3" y="595.7" width="2.6" height="3.6" rx="1" fill="#e8505b"/>
<rect x="678.4" y="504.1" width="2.6" height="3.6" rx="1" fill="#e8505b"/>
<rect x="922.1" y="494.3" width="2.6" height="3.6" rx="1" fill="#e8505b"/>
<rect x="590.1" y="288.7" width="17" height="11" fill="#5f9148"/><rect x="590.1" y="288.7" width="17" height="2" fill="#f5a623"/><text x="598.6" y="295.4" text-anchor="middle" dominant-baseline="central" font-size="6" fill="#e8f0e4" textLength="11" lengthAdjust="spacingAndGlyphs">G227</text>
<rect x="385.5" y="445.2" width="17" height="11" fill="#5f9148"/><rect x="385.5" y="445.2" width="17" height="2" fill="#f5a623"/><text x="394" y="451.9" text-anchor="middle" dominant-baseline="central" font-size="6" fill="#e8f0e4" textLength="11" lengthAdjust="spacingAndGlyphs">G109</text>
<rect x="465.4" y="478.8" width="17" height="11" fill="#5f9148"/><rect x="465.4" y="478.8" width="17" height="2" fill="#f5a623"/><text x="473.9" y="485.5" text-anchor="middle" dominant-baseline="central" font-size="6" fill="#e8f0e4" textLength="11" lengthAdjust="spacingAndGlyphs">G109</text>
<rect x="812.6" y="269.6" width="17" height="11" fill="#5f9148"/><rect x="812.6" y="269.6" width="17" height="2" fill="#f5a623"/><text x="821.1" y="276.3" text-anchor="middle" dominant-baseline="central" font-size="6" fill="#e8f0e4" textLength="11" lengthAdjust="spacingAndGlyphs">G2012</text>
<rect x="380.7" y="634.8" width="17" height="11" fill="#5f9148"/><rect x="380.7" y="634.8" width="17" height="2" fill="#f5a623"/><text x="389.2" y="641.5" text-anchor="middle" dominant-baseline="central" font-size="6" fill="#e8f0e4" textLength="11" lengthAdjust="spacingAndGlyphs">G214</text>
<rect x="860.8" y="621.9" width="17" height="11" fill="#5f9148"/><rect x="860.8" y="621.9" width="17" height="2" fill="#f5a623"/><text x="869.3" y="628.6" text-anchor="middle" dominant-baseline="central" font-size="6" fill="#e8f0e4" textLength="11" lengthAdjust="spacingAndGlyphs">G309</text>
<rect x="934.7" y="588.9" width="17" height="11" fill="#5f9148"/><rect x="934.7" y="588.9" width="17" height="2" fill="#f5a623"/><text x="943.2" y="595.6" text-anchor="middle" dominant-baseline="central" font-size="6" fill="#e8f0e4" textLength="11" lengthAdjust="spacingAndGlyphs">G309</text>
<rect x="349" y="271" width="163" height="1.2" fill="#d8d8d8"/><rect x="512" y="271" width="40" height="1" fill="#e6e6e6"/>
<rect x="349" y="704" width="3" height="4" fill="#222"/>
<rect x="625" y="438" width="44" height="20" rx="5.5" fill="#000" fill-opacity=".5"/>
<text x="639.5" y="447.5" font-size="12.3" font-weight="500" stroke="#fff" stroke-width=".250" fill="#fff" dominant-baseline="central">虎旗</text>
<rect x="631" y="443.3" width="1.3" height="4" fill="#fff" fill-opacity=".8"/><rect x="633.5" y="451.3" width="3" height="1.3" fill="#fff" fill-opacity=".8"/><rect x="638" y="442.8" width="3" height="1.2" fill="#fff" fill-opacity=".8"/>
<path d="M640.53 469.68A7 7 0 1 1 653.47 469.68C651.86 473.56 647 477.7 647 482.6C647 477.7 642.14 473.56 640.53 469.68Z" fill="#47d0ae"/>
<rect x="784" y="397" width="68" height="20" rx="5.5" fill="#000" fill-opacity=".5"/>
<text x="788.2" y="405.9" font-size="12.3" font-weight="500" stroke="#fff" stroke-width=".250" fill="#fff" dominant-baseline="central">马</text><text x="848.2" y="405.9" font-size="12.3" font-weight="500" stroke="#fff" stroke-width=".250" fill="#fff" dominant-baseline="central" text-anchor="end">场</text>
<rect x="804" y="401.7" width="1.3" height="4" fill="#fff" fill-opacity=".8"/><rect x="806.5" y="409.7" width="3" height="1.3" fill="#fff" fill-opacity=".8"/><rect x="811" y="401.2" width="3" height="1.2" fill="#fff" fill-opacity=".8"/><rect x="817" y="401.7" width="1.3" height="4" fill="#fff" fill-opacity=".8"/><rect x="819.5" y="409.7" width="3" height="1.3" fill="#fff" fill-opacity=".8"/><rect x="824" y="401.2" width="3" height="1.2" fill="#fff" fill-opacity=".8"/>
<path d="M811.83 427.98A7 7 0 1 1 824.77 427.98C823.16 431.86 818.3 436 818.3 440.9C818.3 436 813.44 431.86 811.83 427.98Z" fill="#47d0ae"/>
<rect x="491" y="581" width="79.5" height="19.5" rx="5.5" fill="#000" fill-opacity=".5"/>
<text x="494" y="589.7" font-size="12.3" font-weight="500" stroke="#fff" stroke-width=".250" fill="#fff" dominant-baseline="central">贵</text><text x="567" y="589.7" font-size="12.3" font-weight="500" stroke="#fff" stroke-width=".250" fill="#fff" dominant-baseline="central" text-anchor="end">中学</text>
<rect x="510" y="585.5" width="1.3" height="4" fill="#fff" fill-opacity=".8"/><rect x="512.5" y="593.5" width="3" height="1.3" fill="#fff" fill-opacity=".8"/><rect x="517" y="585" width="3" height="1.2" fill="#fff" fill-opacity=".8"/><rect x="523" y="585.5" width="1.3" height="4" fill="#fff" fill-opacity=".8"/><rect x="525.5" y="593.5" width="3" height="1.3" fill="#fff" fill-opacity=".8"/><rect x="530" y="585" width="3" height="1.2" fill="#fff" fill-opacity=".8"/>
<path d="M524.13 612.08A7 7 0 1 1 537.07 612.08C535.46 615.96 530.6 620.1 530.6 625C530.6 620.1 525.74 615.96 524.13 612.08Z" fill="#47d0ae"/>
<rect x="554" y="616" width="92" height="20.5" rx="5.5" fill="#000" fill-opacity=".5"/>
<text x="568" y="625.2" font-size="12.3" font-weight="500" stroke="#fff" stroke-width=".250" fill="#fff" dominant-baseline="central">德</text><text x="642.3" y="625.2" font-size="12.3" font-weight="500" stroke="#fff" stroke-width=".250" fill="#fff" dominant-baseline="central" text-anchor="end">珠寺</text>
<rect x="558" y="621" width="1.3" height="4" fill="#fff" fill-opacity=".8"/><rect x="560.5" y="629" width="3" height="1.3" fill="#fff" fill-opacity=".8"/><rect x="565" y="620.5" width="3" height="1.2" fill="#fff" fill-opacity=".8"/>
<rect x="585" y="621" width="1.3" height="4" fill="#fff" fill-opacity=".8"/><rect x="587.5" y="629" width="3" height="1.3" fill="#fff" fill-opacity=".8"/><rect x="592" y="620.5" width="3" height="1.2" fill="#fff" fill-opacity=".8"/><rect x="598" y="621" width="1.3" height="4" fill="#fff" fill-opacity=".8"/><rect x="600.5" y="629" width="3" height="1.3" fill="#fff" fill-opacity=".8"/><rect x="605" y="620.5" width="3" height="1.2" fill="#fff" fill-opacity=".8"/>
<path d="M593.13 647.78A7 7 0 1 1 606.07 647.78C604.46 651.66 599.6 655.8 599.6 660.7C599.6 655.8 594.74 651.66 593.13 647.78Z" fill="#47d0ae"/>
<circle cx="699.2" cy="573" r="11.5" fill="#f26b3f" fill-opacity=".35"/><circle cx="699.2" cy="573" r="9" fill="#f26b3f" fill-opacity=".3"/><circle cx="699.2" cy="573" r="6.8" fill="#f3704a"/>
<rect x="706.5" y="564" width="67.5" height="19.5" rx="5.5" fill="#000" fill-opacity=".5"/>
<text x="710" y="572.7" font-size="12.3" font-weight="500" stroke="#fff" stroke-width=".250" fill="#fff" dominant-baseline="central">化</text><text x="771.2" y="572.7" font-size="12.3" font-weight="500" stroke="#fff" stroke-width=".250" fill="#fff" dominant-baseline="central" text-anchor="end">上村</text>
<rect x="726" y="568.5" width="1.3" height="4" fill="#fff" fill-opacity=".8"/><rect x="728.5" y="576.5" width="3" height="1.3" fill="#fff" fill-opacity=".8"/><rect x="733" y="568" width="3" height="1.2" fill="#fff" fill-opacity=".8"/>
<path d="M711.03 611.18A7 7 0 1 1 723.97 611.18C722.36 615.06 717.5 619.2 717.5 624.1C717.5 619.2 712.64 615.06 711.03 611.18Z" fill="#47d0ae"/>
<rect x="684" y="580" width="68" height="20" rx="5.5" fill="#000" fill-opacity=".5"/>
<text x="699.3" y="588.9" font-size="12.3" font-weight="500" stroke="#fff" stroke-width=".250" fill="#fff" dominant-baseline="central">隆</text><text x="747.6" y="588.9" font-size="12.3" font-weight="500" stroke="#fff" stroke-width=".250" fill="#fff" dominant-baseline="central" text-anchor="end">段</text>
<rect x="688" y="584.7" width="1.3" height="4" fill="#fff" fill-opacity=".8"/><rect x="690.5" y="592.7" width="3" height="1.3" fill="#fff" fill-opacity=".8"/><rect x="695" y="584.2" width="3" height="1.2" fill="#fff" fill-opacity=".8"/>
<rect x="716" y="584.7" width="1.3" height="4" fill="#fff" fill-opacity=".8"/><rect x="718.5" y="592.7" width="3" height="1.3" fill="#fff" fill-opacity=".8"/><rect x="723" y="584.2" width="3" height="1.2" fill="#fff" fill-opacity=".8"/>
</g></svg>
<div class="panel" style="left:970px;top:139px;width:383px;height:172px"></div>
<div class="abs" style="left:970px;top:139px;width:122px;height:29px;background:#7ebbfc;border-radius:8px 0 12px 0"></div><svg style="left:977px;top:146px" width="14" height="16" viewBox="0 0 14 16"><path d="M7 1.8c-2.4 0-3.8 1.9-3.8 4.1v3.4L1.6 11.7h10.8l-1.6-2.4V5.9c0-2.2-1.4-4.1-3.8-4.1z" fill="none" stroke="#e6f1ff" stroke-width="1.2" stroke-linejoin="round"/><path d="M5.6 13.3a1.4 1.4 0 0 0 2.8 0" fill="none" stroke="#e6f1ff" stroke-width="1.1"/><path d="M7 .6v1.2" stroke="#e6f1ff" stroke-width="1.2"/></svg><div class="t" style="left:996px;top:147.7px;font-size:12px;font-weight:500;color:#fff;letter-spacing:0;-webkit-text-stroke:.3px #fff">近30天报警数据</div>
<div class="t" style="left:1306.5px;top:147.5px;font-size:12px;color:#4a566b">30天</div><svg style="left:1336px;top:151.5px" width="9" height="6" viewBox="0 0 9 6"><path d="M1 1l3.5 3.5L8 1" fill="none" stroke="#4a566b" stroke-width="1.2"/></svg>
<svg style="left:0;top:0" width="1364" height="727">
<path d="M1078.64 181.7A41.8 41.8 0 1 1 1037.2 223.35L1053.1 223.41A25.9 25.9 0 1 0 1078.77 197.6Z" fill="#b8b074"/>
<path d="M1037.2 223.79A41.8 41.8 0 0 1 1037.39 219.57L1053.21 221.06A25.9 25.9 0 0 0 1053.1 223.68Z" fill="#3b9c8d"/>
<path d="M1037.35 220A41.8 41.8 0 0 1 1077.54 181.73L1078.1 197.62A25.9 25.9 0 0 0 1053.19 221.33Z" fill="#5bd410"/>
<path d="M1077.32 181.73A41.8 41.8 0 0 1 1078.71 181.7L1078.82 197.6A25.9 25.9 0 0 0 1077.96 197.62Z" fill="#b5653a"/>
<rect x="1182" y="226.4" width="30" height="12.5" fill="#b2ebf2" stroke="#fff" stroke-width=".8"/>
<rect x="1182" y="238.9" width="30" height="12.5" fill="#b2ebf2" stroke="#fff" stroke-width=".8"/>
<rect x="1182" y="251.4" width="30" height="12.5" fill="#b2ebf2" stroke="#fff" stroke-width=".8"/>
<rect x="1182" y="263.9" width="30" height="12.5" fill="#b2ebf2" stroke="#fff" stroke-width=".8"/>
<rect x="1212" y="188.9" width="30" height="12.5" fill="#b2ebf2" stroke="#fff" stroke-width=".8"/>
<rect x="1212" y="201.4" width="30" height="12.5" fill="#b2ebf2" stroke="#fff" stroke-width=".8"/>
<rect x="1212" y="213.9" width="30" height="12.5" fill="#b2ebf2" stroke="#fff" stroke-width=".8"/>
<rect x="1212" y="226.4" width="30" height="12.5" fill="#b2ebf2" stroke="#fff" stroke-width=".8"/>
<rect x="1212" y="238.9" width="30" height="12.5" fill="#b2ebf2" stroke="#fff" stroke-width=".8"/>
<rect x="1212" y="251.4" width="30" height="12.5" fill="#b2ebf2" stroke="#fff" stroke-width=".8"/>
<rect x="1212" y="263.9" width="30" height="12.5" fill="#b2ebf2" stroke="#fff" stroke-width=".8"/>
<rect x="1242" y="188.9" width="30" height="12.5" fill="#b2ebf2" stroke="#fff" stroke-width=".8"/>
<rect x="1242" y="201.4" width="30" height="12.5" fill="#b2ebf2" stroke="#fff" stroke-width=".8"/>
<rect x="1242" y="213.9" width="30" height="12.5" fill="#b2ebf2" stroke="#fff" stroke-width=".8"/>
<rect x="1242" y="226.4" width="30" height="12.5" fill="#b2ebf2" stroke="#fff" stroke-width=".8"/>
<rect x="1242" y="238.9" width="30" height="12.5" fill="#b2ebf2" stroke="#fff" stroke-width=".8"/>
<rect x="1242" y="251.4" width="30" height="12.5" fill="#b2ebf2" stroke="#fff" stroke-width=".8"/>
<rect x="1242" y="263.9" width="30" height="12.5" fill="#b2ebf2" stroke="#fff" stroke-width=".8"/>
<rect x="1272" y="188.9" width="30" height="12.5" fill="#b2ebf2" stroke="#fff" stroke-width=".8"/>
<rect x="1272" y="201.4" width="30" height="12.5" fill="#b2ebf2" stroke="#fff" stroke-width=".8"/>
<rect x="1272" y="213.9" width="30" height="12.5" fill="#b2ebf2" stroke="#fff" stroke-width=".8"/>
<rect x="1272" y="226.4" width="30" height="12.5" fill="#b2ebf2" stroke="#fff" stroke-width=".8"/>
<rect x="1272" y="238.9" width="30" height="12.5" fill="#b2ebf2" stroke="#fff" stroke-width=".8"/>
<rect x="1272" y="251.4" width="30" height="12.5" fill="#b2ebf2" stroke="#fff" stroke-width=".8"/>
<rect x="1272" y="263.9" width="30" height="12.5" fill="#b2ebf2" stroke="#fff" stroke-width=".8"/>
<rect x="1302" y="188.9" width="30" height="12.5" fill="#b2ebf2" stroke="#fff" stroke-width=".8"/>
<rect x="1302" y="201.4" width="30" height="12.5" fill="#b2ebf2" stroke="#fff" stroke-width=".8"/>
<rect x="1302" y="213.9" width="30" height="12.5" fill="#48c9b0" stroke="#fff" stroke-width=".8"/>
<rect x="1302" y="226.4" width="30" height="12.5" fill="#f4511e" stroke="#fff" stroke-width=".8"/>
<rect x="1302" y="238.9" width="30" height="12.5" fill="#b2ebf2" stroke="#fff" stroke-width=".8"/>
</svg>
<div class="t c" style="left:1196px;top:171px;font-size:10.5px;color:#000">七月</div>
<div class="t c" style="left:1257px;top:171px;font-size:10.5px;color:#000">八月</div>
<div class="t c" style="left:1166px;top:188px;font-size:11px;color:#000;font-weight:400">一</div>
<div class="t c" style="left:1166px;top:199.3px;font-size:11px;color:#000;font-weight:400">二</div>
<div class="t c" style="left:1166px;top:212.5px;font-size:11px;color:#000;font-weight:400">三</div>
<div class="t c" style="left:1166px;top:225.8px;font-size:11px;color:#000;font-weight:400">四</div>
<div class="t c" style="left:1166px;top:239px;font-size:11px;color:#000;font-weight:400">五</div>
<div class="t c" style="left:1166px;top:252.3px;font-size:11px;color:#000;font-weight:400">六</div>
<div class="t c" style="left:1166px;top:264.3px;font-size:11px;color:#000;font-weight:400">日</div>
<div class="t c" style="left:1070px;top:282.5px;font-size:12px;color:#666">报警 时间占比</div>
<div class="t c" style="left:1251.5px;top:282.5px;font-size:12px;color:#666">报警日历</div>
<div class="panel" style="left:970px;top:319px;width:383px;height:207px"></div>
<div class="abs" style="left:970px;top:319px;width:108px;height:29px;background:#7ebbfc;border-radius:8px 0 12px 0"></div><svg style="left:976.5px;top:326.5px" width="14" height="14" viewBox="0 0 14 14"><rect x=".7" y=".7" width="12.6" height="12.6" rx="1" fill="none" stroke="#e6f1ff" stroke-width="1.1"/><path d="M3.3 4h7.4M3.3 7h7.4M3.3 10h7.4" stroke="#e6f1ff" stroke-width="1"/></svg><div class="t" style="left:996px;top:327.7px;font-size:12px;font-weight:500;color:#fff;letter-spacing:0;-webkit-text-stroke:.3px #fff">重要实时数据</div>
<div class="abs" style="left:970px;top:320px;width:382px;height:199.5px;overflow:hidden"><svg style="left:26.5px;top:54px" width="10" height="14" viewBox="0 0 10 14"><path d="M6.8 1L1.8 7.6h3.3L3.3 13l5.2-7H5.3z" fill="none" stroke="#f5a83a" stroke-width="1.1" stroke-linejoin="round"/></svg>
<div class="t" style="left:45.5px;top:52.7px;font-size:16px;color:#8c97ad;-webkit-text-stroke:.2px #fff">232.9 <span style="font-size:12px;color:#777;-webkit-text-stroke:0">V</span></div>
<div class="t" style="left:187.5px;top:46px;font-size:12px;color:#636363">化　线　段 UPS</div>
<div class="t" style="left:187.5px;top:64.5px;font-size:12px;color:#636363">A相输入电压</div>
<div class="abs" style="left:14px;top:80px;width:356px;height:1px;background:#f4f4f4"></div>
<svg style="left:26.5px;top:98px" width="10" height="14" viewBox="0 0 10 14"><path d="M6.8 1L1.8 7.6h3.3L3.3 13l5.2-7H5.3z" fill="none" stroke="#f5a83a" stroke-width="1.1" stroke-linejoin="round"/></svg>
<div class="t" style="left:45.5px;top:96.7px;font-size:16px;color:#8c97ad;-webkit-text-stroke:.2px #fff">220.4 <span style="font-size:12px;color:#777;-webkit-text-stroke:0">V</span></div>
<div class="t" style="left:187.5px;top:90px;font-size:12px;color:#636363">化　线　段 UPS</div>
<div class="t" style="left:187.5px;top:108.5px;font-size:12px;color:#636363">A相输出电压</div>
<div class="abs" style="left:14px;top:124px;width:356px;height:1px;background:#f4f4f4"></div>
<svg style="left:26.5px;top:142px" width="10" height="14" viewBox="0 0 10 14"><path d="M6.8 1L1.8 7.6h3.3L3.3 13l5.2-7H5.3z" fill="none" stroke="#f5a83a" stroke-width="1.1" stroke-linejoin="round"/></svg>
<div class="t" style="left:45.5px;top:140.7px;font-size:16px;color:#8c97ad;-webkit-text-stroke:.2px #fff">237.6 <span style="font-size:12px;color:#777;-webkit-text-stroke:0">V</span></div>
<div class="t" style="left:187.5px;top:134px;font-size:12px;color:#636363">化　西　村 UPS</div>
<div class="t" style="left:187.5px;top:152.5px;font-size:12px;color:#636363">A相输入电压</div>
<div class="abs" style="left:14px;top:168px;width:356px;height:1px;background:#f4f4f4"></div>
<svg style="left:26.5px;top:186px" width="10" height="14" viewBox="0 0 10 14"><path d="M6.8 1L1.8 7.6h3.3L3.3 13l5.2-7H5.3z" fill="none" stroke="#f5a83a" stroke-width="1.1" stroke-linejoin="round"/></svg>
<div class="t" style="left:45.5px;top:184.7px;font-size:16px;color:#8c97ad;-webkit-text-stroke:.2px #fff">220 <span style="font-size:12px;color:#777;-webkit-text-stroke:0">V</span></div>
<div class="t" style="left:187.5px;top:178px;font-size:12px;color:#636363">化　西　村 UPS</div>
<div class="t" style="left:187.5px;top:196.5px;font-size:12px;color:#636363">A相输出电压</div></div>
<div class="panel" style="left:970px;top:534px;width:383px;height:179px"></div>
<div class="abs" style="left:970px;top:534px;width:122px;height:29px;background:#7ebbfc;border-radius:8px 0 12px 0"></div><svg style="left:977px;top:541px" width="14" height="15" viewBox="0 0 14 15"><path d="M1.5 14V9.5M5 14V2M8.5 14V6.5M12 14V3.5" stroke="#d8eaff" stroke-width="2.4"/></svg><div class="t" style="left:996px;top:542.7px;font-size:12px;font-weight:500;color:#fff;letter-spacing:0;-webkit-text-stroke:.3px #fff">近30天历史数据</div>
<div class="t" style="left:1306.5px;top:542.5px;font-size:12px;color:#4a566b">30天</div><svg style="left:1336px;top:546.5px" width="9" height="6" viewBox="0 0 9 6"><path d="M1 1l3.5 3.5L8 1" fill="none" stroke="#4a566b" stroke-width="1.2"/></svg>
<div class="t" style="left:985.8px;top:593.5px;font-size:12.5px;color:#999">238</div>
<div class="t" style="left:985.8px;top:609.5px;font-size:12.5px;color:#999">236</div>
<div class="t" style="left:985.8px;top:625.5px;font-size:12.5px;color:#999">234</div>
<div class="t" style="left:985.8px;top:641.5px;font-size:12.5px;color:#999">232</div>
<div class="t" style="left:985.8px;top:657.5px;font-size:12.5px;color:#999">230</div>
<div class="t" style="left:1011px;top:585.5px;font-size:12px;color:#c8c8c8">V</div>
<div class="t c" style="left:1159.5px;top:685px;font-size:12px;color:#666">UPSA相输入电压</div>
<svg style="left:0;top:0" width="1364" height="727"><defs><linearGradient id="ag" x1="0" y1="624" x2="0" y2="665" gradientUnits="userSpaceOnUse"><stop offset="0" stop-color="#2ec7c9" stop-opacity=".34"/><stop offset="1" stop-color="#2ec7c9" stop-opacity="0"/></linearGradient></defs>
<path d="M1015.7 651.8C1016.8 650.6 1018.4 643.9 1021.3 645.9C1024.2 647.8 1026.8 661.2 1030.2 661.6C1033.6 662 1035.1 651.7 1038.5 648C1041.9 644.2 1043.2 645.1 1047.4 642.9C1051.5 640.7 1054.9 634.3 1059.2 637C1063.6 639.7 1065.2 656 1069 656.3C1072.9 656.6 1074.8 644.5 1078.5 638.5C1082.2 632.4 1083.5 628.4 1087.4 626C1091.2 623.7 1093.8 625.3 1097.7 626.9C1101.7 628.5 1101.9 633.2 1107.2 634C1112.5 634.9 1118.6 631.1 1124.4 631.1C1130.2 631.1 1131.8 633.9 1136.2 634C1140.7 634.2 1142.9 633.3 1146.6 632C1150.3 630.6 1151.4 625.7 1154.6 627.2C1157.9 628.7 1158.9 635.3 1162.9 639.4C1166.9 643.4 1170.6 643.2 1174.8 647.4C1178.9 651.5 1179.8 658.6 1183.6 660.1C1187.5 661.6 1190.3 657.6 1194 654.8C1197.7 651.9 1198.7 645.9 1202.3 645.9C1205.9 645.9 1208.1 651.7 1211.8 654.8C1215.5 657.9 1216.8 659.5 1220.7 661.3C1224.5 663.1 1227.2 664.1 1231 663.7C1234.9 663.2 1236.2 658.2 1239.9 659.2C1243.6 660.3 1246.3 670.1 1249.7 669C1253.1 667.9 1254.6 657.6 1257.1 653.9C1259.6 650.2 1259.6 651.2 1262.1 650.3C1264.6 649.5 1266.3 650.6 1269.5 649.7C1272.8 648.9 1274.9 645.7 1278.4 645.9C1282 646.1 1283.6 653.6 1287.3 650.9C1291 648.3 1293.2 632.2 1297.1 632.6C1300.9 632.9 1302.9 652.1 1306.6 652.7C1310.2 653.3 1311.6 639.8 1315.5 635.5C1319.3 631.2 1321.8 632.7 1325.8 631.1C1329.8 629.4 1333.6 628 1335.6 627.2L1335.6 673L1015.7 673Z" fill="url(#ag)"/>
<path d="M1015.7 651.8C1016.8 650.6 1018.4 643.9 1021.3 645.9C1024.2 647.8 1026.8 661.2 1030.2 661.6C1033.6 662 1035.1 651.7 1038.5 648C1041.9 644.2 1043.2 645.1 1047.4 642.9C1051.5 640.7 1054.9 634.3 1059.2 637C1063.6 639.7 1065.2 656 1069 656.3C1072.9 656.6 1074.8 644.5 1078.5 638.5C1082.2 632.4 1083.5 628.4 1087.4 626C1091.2 623.7 1093.8 625.3 1097.7 626.9C1101.7 628.5 1101.9 633.2 1107.2 634C1112.5 634.9 1118.6 631.1 1124.4 631.1C1130.2 631.1 1131.8 633.9 1136.2 634C1140.7 634.2 1142.9 633.3 1146.6 632C1150.3 630.6 1151.4 625.7 1154.6 627.2C1157.9 628.7 1158.9 635.3 1162.9 639.4C1166.9 643.4 1170.6 643.2 1174.8 647.4C1178.9 651.5 1179.8 658.6 1183.6 660.1C1187.5 661.6 1190.3 657.6 1194 654.8C1197.7 651.9 1198.7 645.9 1202.3 645.9C1205.9 645.9 1208.1 651.7 1211.8 654.8C1215.5 657.9 1216.8 659.5 1220.7 661.3C1224.5 663.1 1227.2 664.1 1231 663.7C1234.9 663.2 1236.2 658.2 1239.9 659.2C1243.6 660.3 1246.3 670.1 1249.7 669C1253.1 667.9 1254.6 657.6 1257.1 653.9C1259.6 650.2 1259.6 651.2 1262.1 650.3C1264.6 649.5 1266.3 650.6 1269.5 649.7C1272.8 648.9 1274.9 645.7 1278.4 645.9C1282 646.1 1283.6 653.6 1287.3 650.9C1291 648.3 1293.2 632.2 1297.1 632.6C1300.9 632.9 1302.9 652.1 1306.6 652.7C1310.2 653.3 1311.6 639.8 1315.5 635.5C1319.3 631.2 1321.8 632.7 1325.8 631.1C1329.8 629.4 1333.6 628 1335.6 627.2" fill="none" stroke="#48c8cb" stroke-width="1"/>
<path d="M1015 673.5H1336" stroke="#ccc" stroke-width="1"/>
<path d="M1080.64 609.18A8.1 8.1 0 1 1 1095.36 609.18C1093.33 613.6 1088 616.13 1088 621.8C1088 616.13 1082.67 613.6 1080.64 609.18Z" fill="#2ec7c9"/>
<text x="1088" y="607.7" text-anchor="middle" dominant-baseline="central" font-size="12" font-weight="bold" fill="#fff" stroke="#2ec7c9" stroke-width="2.4" letter-spacing=".3" paint-order="stroke" stroke-linejoin="round">235.1</text>
<path d="M1242.35 654.11A8.1 8.1 0 1 1 1257.05 654.11C1255 658.52 1249.7 660.83 1249.7 666.5C1249.7 660.83 1244.4 658.52 1242.35 654.11Z" fill="#2ec7c9"/>
<text x="1249.7" y="652.6" text-anchor="middle" dominant-baseline="central" font-size="12" font-weight="bold" fill="#fff" stroke="#2ec7c9" stroke-width="2.4" letter-spacing=".3" paint-order="stroke" stroke-linejoin="round">229.5</text>
</svg>
<!-- bottom strip --><div class="abs" style="left:0;top:723px;width:1364px;height:4px;background:#fff"></div>
<!-- app header -->
<div class="abs" style="left:0;top:71px;width:1364px;height:60px;background:#767c8d;box-shadow:0 2px 6px rgba(0,0,0,.28)"></div>
<div class="abs" style="left:16px;top:94px;width:19px;height:2.6px;background:#fff;border-radius:1px"></div>
<div class="abs" style="left:16px;top:99.5px;width:19px;height:2.6px;background:#fff;border-radius:1px"></div>
<div class="abs" style="left:16px;top:105px;width:19px;height:2.6px;background:#fff;border-radius:1px"></div>
<svg style="left:0;top:71px" width="200" height="60" viewBox="0 71 200 60"><path d="M48.5 98.8C60 98.2 75 97.6 92 97.4S112 99.6 121 100.4" fill="none" stroke="#fff" stroke-width="11" stroke-linecap="round" stroke-linejoin="round"/><path d="M50 105.8h12M66 106.2h7M78 105.2l4 1.8M86 106.4h13M103 103v4M108 106.5h5M118 105.5l4 1.5" stroke="#fff" stroke-width="1.5" fill="none"/><path d="M62 93.5h18M96 92.8l6 .4" stroke="#fff" stroke-width="1.8"/></svg>
<div class="t" style="left:126px;top:93px;font-size:16px;font-weight:400;color:#fff;text-shadow:0 0 .4px #fff">机房</div>
<div class="t" style="left:163px;top:93.5px;font-size:14px;color:#d5d8de">设备数据</div>
<div class="t" style="left:1015px;top:95px;font-size:12px;color:#fff;text-shadow:0 0 .6px #fff">周五 19:49:36</div>
<svg style="left:1094px;top:98px" width="9" height="6" viewBox="0 0 9 6"><path d="M1 1l3.5 3.5L8 1" fill="none" stroke="#fff" stroke-width="1.4"/></svg>
<div class="abs" style="left:1115px;top:81px;width:40px;height:40px;border-radius:50%;background:#7ebbfc"></div>
<div class="abs" style="left:1163px;top:81px;width:40px;height:40px;border-radius:50%;background:#fdaa2f"></div>
<div class="abs" style="left:1211px;top:81px;width:40px;height:40px;border-radius:50%;background:#4fcfe0"></div>
<div class="abs" style="left:1259px;top:81px;width:40px;height:40px;border-radius:50%;background:#4fcfe0"></div>
<div class="abs" style="left:1307px;top:81px;width:40px;height:40px;border-radius:50%;background:#73e5d1"></div>
<svg style="left:0;top:0" width="1364" height="140"><path d="M1132.74 94.17L1133.19 91.57L1136.81 91.57L1137.26 94.17L1138.23 94.57L1140.38 93.05L1142.95 95.62L1141.43 97.77L1141.83 98.74L1144.43 99.19L1144.43 102.81L1141.83 103.26L1141.43 104.23L1142.95 106.38L1140.38 108.95L1138.23 107.43L1137.26 107.83L1136.81 110.43L1133.19 110.43L1132.74 107.83L1131.77 107.43L1129.62 108.95L1127.05 106.38L1128.57 104.23L1128.17 103.26L1125.57 102.81L1125.57 99.19L1128.17 98.74L1128.57 97.77L1127.05 95.62L1129.62 93.05L1131.77 94.57Z" fill="#fff"/><circle cx="1135" cy="101" r="7" fill="#fff"/><circle cx="1135" cy="101" r="4.1" fill="#7ebbfc"/></svg>
<svg style="left:1173px;top:90px" width="20" height="22" viewBox="0 0 20 22"><path d="M10 2.2c-3.4 0-5.4 2.6-5.4 5.8v4.6L2.6 15.6h14.8l-2-3V8c0-3.2-2-5.8-5.4-5.8z" fill="none" stroke="#fff" stroke-width="2" stroke-linejoin="round"/><path d="M8.2 18.3a1.8 1.8 0 0 0 3.6 0z" fill="#fff"/><circle cx="10" cy="1.8" r="1.2" fill="#fff"/></svg>
<div class="abs" style="left:1185px;top:79px;width:21px;height:21px;border-radius:50%;background:#ee5b3f;border:1px solid #fff;color:#fff;font-weight:bold;font-size:12px;text-align:center;line-height:19px">1</div>
<svg style="left:1220px;top:90px" width="22" height="22" viewBox="0 0 22 22"><path d="M4.2 15.8A8.6 8.6 0 1 1 17.8 15.8" fill="none" stroke="#fff" stroke-width="2"/><path d="M4.2 15.8h13.6" stroke="#fff" stroke-width="1.6"/><rect x="5" y="18.6" width="12" height="1.8" fill="#fff"/><path d="M11 11.5L7.6 6.8" stroke="#fff" stroke-width="1.6"/><circle cx="11" cy="11.5" r="1.8" fill="#fff"/><path d="M11 3.8v1.6M5.3 6l1 1M16.7 6l-1 1M3.6 10.6h1.5M18.4 10.6h-1.5" stroke="#fff" stroke-width="1"/></svg>
<svg style="left:1269px;top:90px" width="20" height="22" viewBox="0 0 20 22"><rect x="1.2" y="1.2" width="17.6" height="19.6" fill="none" stroke="#fff" stroke-width="1.6"/><path d="M7.2 6h8.6M7.2 11h8.6M7.2 16h8.6" stroke="#fff" stroke-width="1.7"/><path d="M3.8 6h1.8M3.8 11h1.8M3.8 16h1.8" stroke="#fff" stroke-width="1.7"/></svg>
<svg style="left:1317px;top:91px" width="20" height="20" viewBox="0 0 20 20"><path d="M10 1.6c2.3 0 3.7 1.7 3.7 4.2 0 1.9-.9 3.7-1.9 4.5v1.3c2.4.8 5.4 1.8 5.9 3.3.2.6.3 1.7.3 2.7H2c0-1 .1-2.1.3-2.7.5-1.5 3.5-2.5 5.9-3.3v-1.3c-1-.8-1.9-2.6-1.9-4.5 0-2.5 1.4-4.2 3.7-4.2z" fill="#fff"/></svg>
<!-- browser chrome -->
<div class="abs" style="left:0;top:0;width:1364px;height:34px;background:#3c4043"></div>
<div class="abs" style="left:7px;top:0;width:240px;height:34px;background:#323639;border-radius:8px 8px 0 0"></div>
<div class="abs" style="left:0;top:26px;width:7px;height:8px;background:#323639"></div><div class="abs" style="left:-9px;top:18px;width:16px;height:16px;background:#3c4043;border-radius:0 0 8px 0"></div>
<div class="abs" style="left:247px;top:26px;width:8px;height:8px;background:#323639"></div><div class="abs" style="left:247px;top:18px;width:16px;height:16px;background:#3c4043;border-radius:0 0 0 8px"></div>
<div class="abs" style="left:0;top:34px;width:1364px;height:37px;background:#323639;border-bottom:1px solid #1e2022"></div>
<svg style="left:21px;top:9px" width="12" height="16" viewBox="0 0 12 16"><path d="M1.5 1.5h6l3 3v10h-9z M7.5 1.5v3h3" fill="none" stroke="#e8eaed" stroke-width="1.4" stroke-linejoin="round"/></svg>
<div class="t" style="left:43px;top:12px;font-size:12.5px;letter-spacing:.35px;color:#e8eaed">site-web</div>
<svg style="left:226px;top:12px" width="10" height="10" viewBox="0 0 10 10"><path d="M1 1l8 8M9 1l-8 8" stroke="#dadce0" stroke-width="1.5"/></svg>
<svg style="left:262px;top:10px" width="14" height="14" viewBox="0 0 14 14"><path d="M7 1v12M1 7h12" stroke="#dadce0" stroke-width="1.7"/></svg>
<div class="abs" style="left:1269px;top:-2px;width:92px;height:19px;border:1px solid #6b6f73;border-radius:0 0 4px 4px"></div>
<div class="abs" style="left:1293px;top:0;width:1px;height:16px;background:#6b6f73"></div><div class="abs" style="left:1318px;top:0;width:1px;height:16px;background:#6b6f73"></div>
<div class="abs" style="left:1275px;top:9px;width:12px;height:3px;background:#cfd0d1;border-radius:1px"></div>
<svg style="left:1299px;top:2px" width="13" height="12" viewBox="0 0 13 12"><path d="M3.5 3.5v-2h8v7h-2" fill="none" stroke="#cfd0d1" stroke-width="1.5"/><rect x="1.2" y="4.2" width="7.6" height="6.6" fill="none" stroke="#cfd0d1" stroke-width="1.7"/></svg>
<svg style="left:1334px;top:3px" width="11" height="10" viewBox="0 0 11 10"><path d="M1.5 1l8 8M9.5 1l-8 8" stroke="#cfd0d1" stroke-width="2.4"/></svg>
<svg style="left:13px;top:44px" width="16" height="16" viewBox="0 0 16 16"><path d="M15 8H2.5M8 2L2 8l6 6" fill="none" stroke="#f1f3f4" stroke-width="2"/></svg>
<svg style="left:45px;top:44px" width="16" height="16" viewBox="0 0 16 16"><path d="M1 8h12.5M8 2l6 6-6 6" fill="none" stroke="#7c8084" stroke-width="2"/></svg>
<svg style="left:77px;top:44px" width="16" height="16" viewBox="0 0 16 16"><path d="M13.2 5.2A6 6 0 1 0 14 8" fill="none" stroke="#f1f3f4" stroke-width="2"/><path d="M14.6 1v5.4H9.2z" fill="#f1f3f4"/></svg>
<svg style="left:108px;top:43px" width="18" height="18" viewBox="0 0 18 18"><path d="M1.5 9.5L9 2.5l7.5 7M4 8.5V16h10V8.5" fill="none" stroke="#f1f3f4" stroke-width="2" stroke-linejoin="miter"/></svg>
<div class="abs" style="left:139px;top:38px;width:1094px;height:28px;border-radius:14px;background:#282c2f"></div>
<svg style="left:150px;top:45px" width="15" height="14" viewBox="0 0 15 14"><path d="M7.5 0.8L14.6 13.4H0.4z" fill="#f1f3f4"/><path d="M7.5 5v4.2M7.5 10.4v1.6" stroke="#282c2f" stroke-width="1.6"/></svg>
<div class="t" style="left:173px;top:44px;font-size:14px;color:#f1f3f4">不安全</div>
<div class="abs" style="left:222px;top:44px;width:1px;height:16px;background:#5f6368"></div>
<div class="t" style="left:232px;top:44.5px;font-size:14px;color:#9aa0a6;letter-spacing:.86px"><span style="color:#fff;letter-spacing:.23px">10.27.2.108</span>/dist/#/layout/dev/00000102-0</div>
<svg style="left:1207px;top:44px" width="16" height="16" viewBox="0 0 16 16"><path d="M8 1.6l1.9 4.3 4.6.4-3.5 3.1 1.1 4.6L8 11.6 3.9 14l1.1-4.6L1.5 6.3l4.6-.4z" fill="none" stroke="#dadce0" stroke-width="1.4" stroke-linejoin="round"/></svg>
<div class="t" style="left:1245px;top:47px;font-size:12px;color:#fff">无痕模式</div>
<svg style="left:1301px;top:42px" width="20" height="20" viewBox="0 0 20 20"><circle cx="10" cy="10" r="10" fill="#f1f3f4"/><path d="M6.3 8.6l1-4.2c.1-.4.5-.6.9-.4l1.8.7 1.8-.7c.4-.2.8 0 .9.4l1 4.2z" fill="#323639"/><rect x="3.6" y="8.6" width="12.8" height="1.3" fill="#323639"/><circle cx="7" cy="13.4" r="2" fill="none" stroke="#323639" stroke-width="1.1"/><circle cx="13" cy="13.4" r="2" fill="none" stroke="#323639" stroke-width="1.1"/><path d="M9 13.2q1-.7 2 0" fill="none" stroke="#323639" stroke-width="1"/></svg>
<div class="abs" style="left:1342px;top:46px;width:3.2px;height:3.2px;border-radius:50%;background:#f1f3f4"></div>
<div class="abs" style="left:1342px;top:50.8px;width:3.2px;height:3.2px;border-radius:50%;background:#f1f3f4"></div>
<div class="abs" style="left:1342px;top:55.699999999999996px;width:3.2px;height:3.2px;border-radius:50%;background:#f1f3f4"></div>
</body></html>
